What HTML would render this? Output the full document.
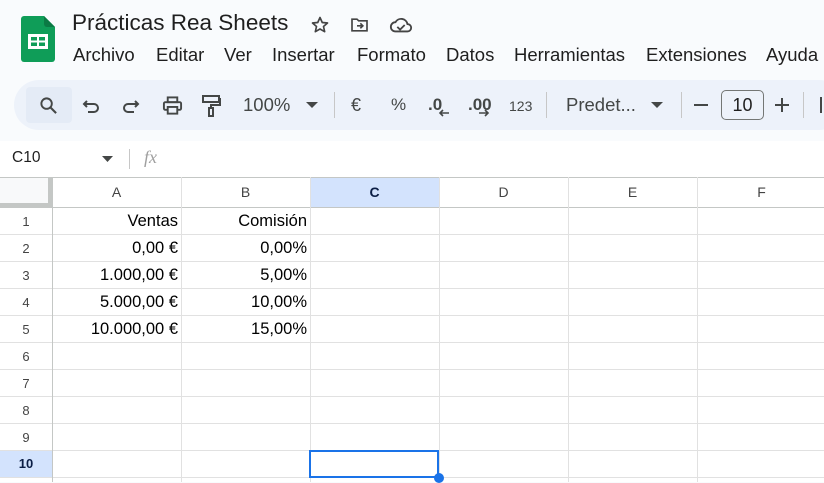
<!DOCTYPE html>
<html><head><meta charset="utf-8"><style>
*{margin:0;padding:0;box-sizing:border-box}
body{width:824px;height:482px;overflow:hidden;background:#f9fbfd;font-family:"Liberation Sans",Arial,sans-serif;position:relative;color:#1f1f1f}
.a{position:absolute;white-space:nowrap}
.menu span{position:absolute;font-size:18.5px;color:#1f1f1f;top:44px}
.tb{position:absolute;left:14px;top:80px;width:830px;height:50px;background:#edf2fa;border-radius:25px}
.sep{position:absolute;top:92px;width:1px;height:26px;background:#c7c7c7}
.ti{position:absolute;font-size:17px;color:#444746;top:95px}
.grid{position:absolute;left:0;top:177px;width:824px;height:305px;background:#fff}
.vl{position:absolute;top:0;width:1px;height:305px;background:#e1e1e1}
.hl{position:absolute;left:0;width:824px;height:1px;background:#e1e1e1}
.ch{position:absolute;top:0;height:30px;line-height:30px;text-align:center;font-size:14px;color:#444}
.rh{position:absolute;left:0;width:52px;text-align:center;font-size:13px;color:#444;height:27px;line-height:27px}
.c{position:absolute;font-size:16.5px;color:#000;text-align:right;height:27px;line-height:27px;padding-right:3px}
</style></head><body>
<svg class="a" style="left:21px;top:16px" width="34" height="46" viewBox="0 0 34 46">
<path d="M3 0h20l11 11v32a3 3 0 0 1-3 3H3a3 3 0 0 1-3-3V3a3 3 0 0 1 3-3z" fill="#0f9d58"/>
<path d="M23 0l11 11h-8a3 3 0 0 1-3-3z" fill="#0b7a44"/>
<rect x="7" y="18" width="20" height="15" fill="#fff"/>
<rect x="10" y="21" width="6" height="3.5" fill="#0f9d58"/><rect x="18" y="21" width="6" height="3.5" fill="#0f9d58"/>
<rect x="10" y="26.5" width="6" height="3.5" fill="#0f9d58"/><rect x="18" y="26.5" width="6" height="3.5" fill="#0f9d58"/>
</svg>
<div class="a" style="left:72px;top:10px;font-size:22.5px;color:#1f1f1f">Prácticas Rea Sheets</div>
<svg class="a" style="left:310px;top:15px" width="20" height="20" viewBox="0 0 24 24"><path d="M12 3l2.7 6 6.3.6-4.8 4.2 1.4 6.2L12 16.8 6.4 20l1.4-6.2L3 9.6 9.3 9z" fill="none" stroke="#444" stroke-width="2" stroke-linejoin="round"/></svg>
<svg class="a" style="left:349px;top:15px" width="21" height="20" viewBox="0 0 24 24"><path d="M3 5h6l2 2h10v12H3z" fill="none" stroke="#444" stroke-width="2"/><path d="M9 13h7M13 10l3 3-3 3" fill="none" stroke="#444" stroke-width="2"/></svg>
<svg class="a" style="left:389px;top:15px" width="24" height="20" viewBox="0 0 26 20"><path d="M7 17a5 5 0 0 1 0-10 7 7 0 0 1 13 2 4 4 0 0 1 0 8z" fill="none" stroke="#444" stroke-width="2"/><path d="M9 12l3 3 5-5" fill="none" stroke="#444" stroke-width="2"/></svg>
<div class="menu">
<span style="left:73px">Archivo</span><span style="left:156px">Editar</span><span style="left:224px">Ver</span><span style="left:272px">Insertar</span><span style="left:357px">Formato</span><span style="left:446px">Datos</span><span style="left:514px">Herramientas</span><span style="left:646px">Extensiones</span><span style="left:766px">Ayuda</span>
</div>
<div class="tb"></div>
<div class="a" style="left:26px;top:87px;width:46px;height:36px;background:#e4ebf6;border-radius:4px"></div>
<svg class="a" style="left:39px;top:96px" width="19" height="19" viewBox="0 0 20 20"><circle cx="8" cy="8" r="5.5" fill="none" stroke="#444746" stroke-width="2"/><path d="M12 12l6 6" stroke="#444746" stroke-width="2.2"/></svg>
<svg class="a" style="left:82px;top:97px" width="20" height="18" viewBox="0 0 20 18"><path d="M5 4L2 7l3 3" fill="none" stroke="#444746" stroke-width="2"/><path d="M2 7h10a4 4 0 0 1 0 8H6" fill="none" stroke="#444746" stroke-width="2"/></svg>
<svg class="a" style="left:120px;top:97px" width="20" height="18" viewBox="0 0 20 18"><path d="M15 4l3 3-3 3" fill="none" stroke="#444746" stroke-width="2"/><path d="M18 7H8a4 4 0 0 0 0 8h6" fill="none" stroke="#444746" stroke-width="2"/></svg>
<svg class="a" style="left:162px;top:96px" width="21" height="20" viewBox="0 0 22 20"><rect x="6" y="1" width="10" height="5" fill="none" stroke="#444746" stroke-width="2"/><rect x="2" y="6" width="18" height="8" rx="1.5" fill="none" stroke="#444746" stroke-width="2"/><rect x="6" y="11" width="10" height="7" fill="#edf2fa" stroke="#444746" stroke-width="2"/></svg>
<svg class="a" style="left:201px;top:95px" width="20" height="22" viewBox="0 0 20 22"><rect x="2" y="1" width="16" height="6" fill="none" stroke="#444746" stroke-width="2"/><path d="M18 4h1v6h-9v3" fill="none" stroke="#444746" stroke-width="2"/><rect x="8" y="13" width="4" height="8" fill="none" stroke="#444746" stroke-width="2"/></svg>
<div class="ti" style="left:243px;font-size:18.5px;top:94px">100%</div>
<svg class="a" style="left:306px;top:102px" width="12" height="7"><path d="M0 0h12L6 6z" fill="#444746"/></svg>
<div class="sep" style="left:334px"></div>
<div class="ti" style="left:351px;font-size:18px">€</div>
<div class="ti" style="left:391px;font-size:17px">%</div>
<div class="ti" style="left:428px;font-weight:bold">.0</div>
<svg class="a" style="left:438px;top:108px" width="12" height="10"><path d="M11 5H2M5 2L2 5l3 3" fill="none" stroke="#444746" stroke-width="1.6"/></svg>
<div class="ti" style="left:468px;font-weight:bold">.00</div>
<svg class="a" style="left:478px;top:108px" width="12" height="10"><path d="M1 5h9M7 2l3 3-3 3" fill="none" stroke="#444746" stroke-width="1.6"/></svg>
<div class="ti" style="left:509px;font-size:14px;top:98px">123</div>
<div class="sep" style="left:546px"></div>
<div class="ti" style="left:566px;font-size:18.5px;top:94px">Predet...</div>
<svg class="a" style="left:651px;top:102px" width="12" height="7"><path d="M0 0h12L6 6z" fill="#444746"/></svg>
<div class="sep" style="left:681px"></div>
<div class="a" style="left:694px;top:104px;width:14px;height:2px;background:#444746"></div>
<div class="a" style="left:721px;top:90px;width:43px;height:30px;border:1px solid #747775;border-radius:5px;text-align:center;line-height:28px;font-size:18px;color:#1f1f1f">10</div>
<div class="a" style="left:775px;top:104px;width:14px;height:2px;background:#444746"></div>
<div class="a" style="left:781px;top:98px;width:2px;height:14px;background:#444746"></div>
<div class="sep" style="left:803px"></div>
<div class="a" style="left:820px;top:97px;width:2px;height:16px;background:#444746"></div>
<div class="a" style="left:0;top:141px;width:824px;height:36px;background:#fff"></div>
<div class="a" style="left:12px;top:149px;font-size:15.5px;color:#1f1f1f">C10</div>
<svg class="a" style="left:102px;top:156px" width="11" height="6"><path d="M0 0h11L5.5 6z" fill="#444746"/></svg>
<div class="a" style="left:129px;top:149px;width:1px;height:20px;background:#c7c7c7"></div>
<div class="a" style="left:144px;top:147px;font-size:18px;font-style:italic;color:#a0a0a0;font-family:'Liberation Serif',serif">fx</div>
<div class="grid">
<div class="a" style="left:0;top:0;width:52px;height:30px;background:#f8f9fa;border-right:4px solid #c4c7c5;border-bottom:4px solid #c4c7c5"></div>
<div class="a" style="left:310px;top:0;width:129px;height:30px;background:#d3e3fd"></div>
<div class="a" style="left:0;top:273px;width:52px;height:27px;background:#d3e3fd"></div>
<div class="hl" style="top:0;background:#c4c7c5"></div>
<div class="hl" style="top:30px;background:#c4c7c5"></div>
<div class="hl" style="top:57px"></div><div class="hl" style="top:84px"></div><div class="hl" style="top:111px"></div><div class="hl" style="top:138px"></div><div class="hl" style="top:165px"></div><div class="hl" style="top:192px"></div><div class="hl" style="top:219px"></div><div class="hl" style="top:246px"></div><div class="hl" style="top:273px"></div><div class="hl" style="top:300px"></div>
<div class="vl" style="left:52px;background:#c4c7c5"></div>
<div class="vl" style="left:181px"></div><div class="vl" style="left:310px"></div><div class="vl" style="left:439px"></div><div class="vl" style="left:568px"></div><div class="vl" style="left:697px"></div>
<div class="ch" style="left:52px;width:129px">A</div><div class="ch" style="left:181px;width:129px">B</div><div class="ch" style="left:310px;width:129px;font-weight:bold;color:#0b1e45">C</div><div class="ch" style="left:439px;width:129px">D</div><div class="ch" style="left:568px;width:129px">E</div><div class="ch" style="left:697px;width:129px">F</div>
<div class="rh" style="top:31px">1</div><div class="rh" style="top:58px">2</div><div class="rh" style="top:85px">3</div><div class="rh" style="top:112px">4</div><div class="rh" style="top:139px">5</div><div class="rh" style="top:166px">6</div><div class="rh" style="top:193px">7</div><div class="rh" style="top:220px">8</div><div class="rh" style="top:247px">9</div><div class="rh" style="top:273px;font-weight:bold;color:#0b1e45">10</div>
<div class="c" style="left:52px;width:129px;top:31px">Ventas</div><div class="c" style="left:181px;width:129px;top:31px">Comisión</div>
<div class="c" style="left:52px;width:129px;top:58px">0,00 €</div><div class="c" style="left:181px;width:129px;top:58px">0,00%</div>
<div class="c" style="left:52px;width:129px;top:85px">1.000,00 €</div><div class="c" style="left:181px;width:129px;top:85px">5,00%</div>
<div class="c" style="left:52px;width:129px;top:112px">5.000,00 €</div><div class="c" style="left:181px;width:129px;top:112px">10,00%</div>
<div class="c" style="left:52px;width:129px;top:139px">10.000,00 €</div><div class="c" style="left:181px;width:129px;top:139px">15,00%</div>
<div class="a" style="left:309px;top:273px;width:130px;height:28px;border:2px solid #1a73e8"></div>
<div class="a" style="left:434px;top:296px;width:10px;height:10px;border-radius:50%;background:#1a73e8"></div>
</div>
</body></html>
